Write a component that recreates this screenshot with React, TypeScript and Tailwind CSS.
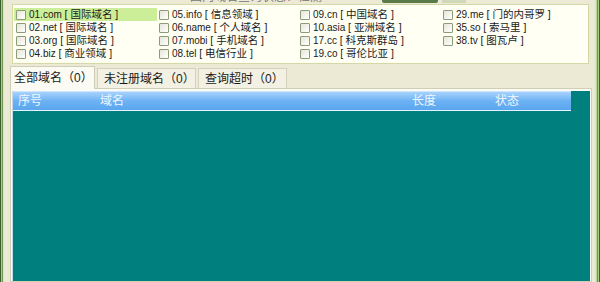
import React from "react";

const items: [string, string][][] = [
  [
    ["01.com", "国际域名"],
    ["02.net", "国际域名"],
    ["03.org", "国际域名"],
    ["04.biz", "商业领域"],
  ],
  [
    ["05.info", "信息领域"],
    ["06.name", "个人域名"],
    ["07.mobi", "手机域名"],
    ["08.tel", "电信行业"],
  ],
  [
    ["09.cn", "中国域名"],
    ["10.asia", "亚洲域名"],
    ["17.cc", "科克斯群岛"],
    ["19.co", "哥伦比亚"],
  ],
  [
    ["29.me", "门的内哥罗"],
    ["35.so", "索马里"],
    ["38.tv", "图瓦卢"],
  ],
];

const font = { fontFamily: '"Liberation Sans", "Noto Sans CJK SC", sans-serif' };

function Check() {
  return (
    <span className="w-[10px] h-[10px] shrink-0 border border-[#8c9c78] rounded-[1px] bg-gradient-to-br from-[#e6e6d8] to-[#ffffff]" />
  );
}

export default function App() {
  return (
    <div
      className="w-[600px] h-[282px] overflow-hidden flex bg-[#ece9d4] text-[#1a1a1a]"
      style={font}
    >
      {/* left frame */}
      <div className="flex h-full shrink-0">
        <div className="w-px bg-[#3e5e30]" />
        <div className="w-px bg-[#a8cc88]" />
        <div className="w-px bg-[#6e9a54]" />
        <div className="w-px bg-[#d6e8bc]" />
      </div>

      <div className="flex-1 flex flex-col min-w-0">
        {/* clipped top strip */}
        <div className="h-[4px] relative overflow-hidden">
          <span className="absolute left-[186px] top-[-10px] text-[12px] leading-[14px] text-[#777]">
            国内域名查询状态：检测
          </span>
          <div className="absolute left-[378px] top-0 w-[56px] h-[3px] bg-[#5a7a48] rounded-b-[2px]" />
          <div className="absolute left-[438px] top-0 w-[24px] h-[3px] bg-[#cfd8b8]" />
        </div>

        {/* group box */}
        <div className="ml-[8px] mr-[6px] h-[60px] border border-[#d4d8a4] bg-[#fffff4] pt-[3px] px-px">
          <div className="grid grid-cols-[143px_141px_143px_140px] leading-[13px]">
            {items.map((col, ci) => (
              <div key={ci} className="flex flex-col">
                {col.map(([d, n], ri) => (
                  <div
                    key={d}
                    className={`h-[13px] flex items-center gap-[3px] pl-[2px] ${
                      ci === 0 && ri === 0 ? "bg-[#cdee98]" : ""
                    }`}
                  >
                    <Check />
                    <span className="whitespace-nowrap text-[10px]">
                      {d} <span className="text-[10.5px]">[ {n} ]</span>
                    </span>
                  </div>
                ))}
              </div>
            ))}
          </div>
        </div>

        {/* tabs */}
        <div className="mt-[1px] ml-[6px] h-[23px] flex items-end text-[12px]">
          <div className="h-[23px] w-[85px] pl-[3px] flex items-center bg-[#fbfbf3] border border-b-0 border-[#cfcfb8] relative top-px z-10 whitespace-nowrap">
            全部域名（0）
          </div>
          <div className="h-[20px] w-[99px] ml-[2px] pl-[6px] flex items-center bg-[#f3f1e3] border border-b-0 border-[#d4d2bc] whitespace-nowrap">
            未注册域名（0）
          </div>
          <div className="h-[20px] w-[89px] ml-[2px] pl-[6px] flex items-center bg-[#f3f1e3] border border-b-0 border-[#d4d2bc] whitespace-nowrap">
            查询超时（0）
          </div>
        </div>

        {/* panel */}
        <div className="flex-1 ml-[6px] mr-[3px] border border-[#cfcfb8] bg-[#fbfbf3] pt-[2px] pl-[1px] pr-[1px] flex flex-col min-h-0">
          <div className="flex-1 bg-[#007f7f] border-l border-[#c8d8e8] flex flex-col">
            <div className="w-[558px] h-[20px] relative bg-gradient-to-b from-[#a6d2fb] via-[#6cb2f4] to-[#5aa6ee] border-t border-[#cfe6fd] border-b border-b-[#e6f2ff] text-[12px] text-[#eef6ff] flex items-center">
              <span className="absolute left-[5px]">序号</span>
              <span className="absolute left-[87px]">域名</span>
              <span className="absolute left-[399px]">长度</span>
              <span className="absolute left-[482px]">状态</span>
            </div>
          </div>
        </div>
      </div>

      {/* right frame */}
      <div className="flex h-full shrink-0">
        <div className="w-px bg-[#d6e8bc]" />
        <div className="w-px bg-[#b8d89c]" />
        <div className="w-px bg-[#6e9a54]" />
        <div className="w-px bg-[#a8cc88]" />
        <div className="w-px bg-[#3e5e30]" />
      </div>
    </div>
  );
}
